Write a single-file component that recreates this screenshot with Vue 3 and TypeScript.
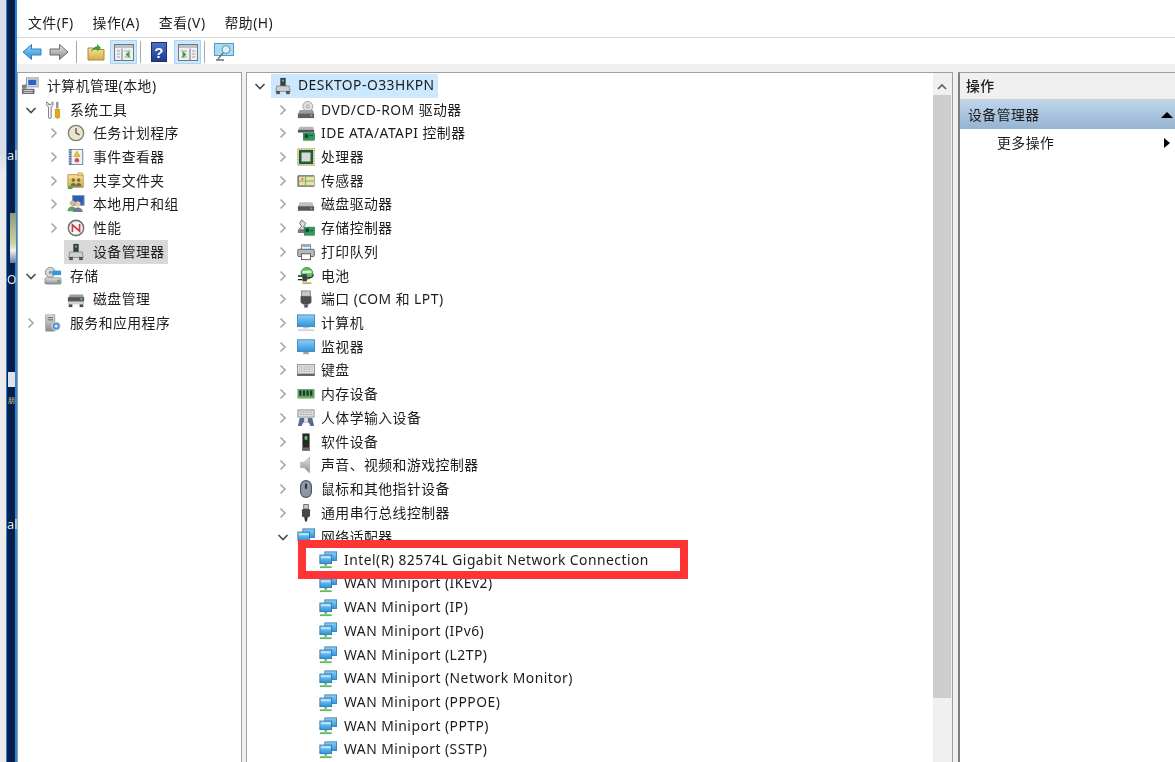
<script setup lang="ts">
interface Row {
  id: string
  icon: string
  text: string
  lv: string
  chev?: 'open' | 'closed'
  sel?: string
}

const menus: string[] = ['文件(F)', '操作(A)', '查看(V)', '帮助(H)']

const leftRows: Row[] = [
  { id: 'l0', icon: 'mgmt', text: '计算机管理(本地)', lv: 'l-0' },
  { id: 'l1', icon: 'tools', text: '系统工具', lv: 'l-1', chev: 'open' },
  { id: 'l2', icon: 'clock', text: '任务计划程序', lv: 'l-2', chev: 'closed' },
  { id: 'l3', icon: 'event', text: '事件查看器', lv: 'l-2', chev: 'closed' },
  { id: 'l4', icon: 'share', text: '共享文件夹', lv: 'l-2', chev: 'closed' },
  { id: 'l5', icon: 'users', text: '本地用户和组', lv: 'l-2', chev: 'closed' },
  { id: 'l6', icon: 'perf', text: '性能', lv: 'l-2', chev: 'closed' },
  { id: 'l7', icon: 'devmgr', text: '设备管理器', lv: 'l-3', sel: 'grey' },
  { id: 'l8', icon: 'storage', text: '存储', lv: 'l-1', chev: 'open' },
  { id: 'l9', icon: 'diskmgr', text: '磁盘管理', lv: 'l-3' },
  { id: 'l10', icon: 'services', text: '服务和应用程序', lv: 'l-1', chev: 'closed' }
]

const miniports: string[] = [
  'WAN Miniport (IKEv2)', 'WAN Miniport (IP)', 'WAN Miniport (IPv6)', 'WAN Miniport (L2TP)',
  'WAN Miniport (Network Monitor)', 'WAN Miniport (PPPOE)', 'WAN Miniport (PPTP)', 'WAN Miniport (SSTP)'
]

const categories: [string, string][] = [
  ['dvd', 'DVD/CD-ROM 驱动器'], ['ide', 'IDE ATA/ATAPI 控制器'], ['cpu', '处理器'], ['sensor', '传感器'],
  ['disk', '磁盘驱动器'], ['storectl', '存储控制器'], ['printer', '打印队列'], ['battery', '电池'],
  ['port', '端口 (COM 和 LPT)'], ['computer', '计算机'], ['monitor', '监视器'], ['keyboard', '键盘'],
  ['memory', '内存设备'], ['hid', '人体学输入设备'], ['software', '软件设备'], ['audio', '声音、视频和游戏控制器'],
  ['mouse', '鼠标和其他指针设备'], ['usb', '通用串行总线控制器']
]

const midRows: Row[] = [
  { id: 'm-root', icon: 'devmgr', text: 'DESKTOP-O33HKPN', lv: 'm-0', chev: 'open', sel: 'blue' },
  ...categories.map(([icon, text]): Row => ({ id: text, icon, text, lv: 'm-1', chev: 'closed' })),
  { id: 'm-net', icon: 'net', text: '网络适配器', lv: 'm-1', chev: 'open' },
  { id: 'm-intel', icon: 'net', text: 'Intel(R) 82574L Gigabit Network Connection', lv: 'm-2' },
  ...miniports.map((text): Row => ({ id: text, icon: 'net', text, lv: 'm-2' }))
]
</script>

<template>
  <div class="page">
    <svg class="defs" aria-hidden="true">
      <defs>
        <linearGradient id="gBlue" x1="0" y1="0" x2="0" y2="1"><stop offset="0" stop-color="#8fd0f5" /><stop offset="1" stop-color="#2f93dc" /></linearGradient>
        <linearGradient id="gGrey" x1="0" y1="0" x2="0" y2="1"><stop offset="0" stop-color="#e4e4e4" /><stop offset="1" stop-color="#8c8c8c" /></linearGradient>
        <linearGradient id="gGold" x1="0" y1="0" x2="0" y2="1"><stop offset="0" stop-color="#f6e39a" /><stop offset="1" stop-color="#d8ac45" /></linearGradient>
        <linearGradient id="gHelp" x1="0" y1="0" x2="0" y2="1"><stop offset="0" stop-color="#4f74c8" /><stop offset="1" stop-color="#1d3a8c" /></linearGradient>
        <symbol id="net" viewBox="0 0 20 20">
          <rect x="6.5" y="1" width="13" height="9.5" fill="url(#gBlue)" stroke="#3a7fb5" />
          <rect x="1" y="4.5" width="13" height="9.5" fill="url(#gBlue)" stroke="#2b77b0" />
          <path d="M2 6h11v2H2z" fill="#bfe6fb" />
          <path d="M6 14.5h3v2H6z" fill="#6db36d" />
          <path d="M1 17h13v2H1z" fill="#5fb85f" />
        </symbol>
        <symbol id="mgmt" viewBox="0 0 20 20">
          <rect x="6" y="1" width="13" height="10" fill="#dfe3e8" stroke="#8b8f96" />
          <rect x="8" y="3" width="9" height="6" fill="#2c62c9" />
          <path d="M1 9l5-1v5H1z" fill="#7c8187" />
          <rect x="1" y="13" width="14" height="6" rx="1" fill="#6d7177" />
          <path d="M3 15h10M3 17h10" stroke="#d8d8d8" />
        </symbol>
        <symbol id="tools" viewBox="0 0 20 20">
          <path d="M3 1v4l2 1.5V18a1.5 1.5 0 0 0 3 0V6.5L10 5V1L8 2.500V4H5V2.500z" fill="#f2f2f2" stroke="#777" />
          <rect x="13.500" y="1" width="2.500" height="7" fill="#8d8d8d" />
          <path d="M12.500 9h4.500l.5 9-2.500 1.500-2.500-1.500z" fill="#e5a714" stroke="#a97a05" stroke-width=".6" />
        </symbol>
        <symbol id="clock" viewBox="0 0 20 20">
          <circle cx="10" cy="10" r="8.500" fill="#ece4c9" stroke="#7d7d76" stroke-width="1.500" />
          <path d="M10 4.500V10l4 2" stroke="#555" stroke-width="1.500" fill="none" />
        </symbol>
        <symbol id="event" viewBox="0 0 20 20">
          <rect x="2" y="1" width="16" height="18" rx="1" fill="#5a77a8" />
          <rect x="5" y="2" width="12" height="16" fill="#f1f1ef" />
          <path d="M3 3v14" stroke="#d8dde8" stroke-dasharray="1 1.500" stroke-width="2" />
          <path d="M11 3.500l3.500 6h-7z" fill="#f0c419" stroke="#a98410" stroke-width=".5" />
          <circle cx="11" cy="13.500" r="2.500" fill="#c9505e" />
        </symbol>
        <symbol id="share" viewBox="0 0 20 20">
          <path d="M1 3h17v14H1z" fill="url(#gGold)" stroke="#b5934a" />
          <path d="M12 1h5v3h-5z" fill="#ecd98f" stroke="#b5934a" stroke-width=".7" />
          <circle cx="7" cy="9" r="2" fill="#7b6a3b" /><circle cx="13" cy="9" r="2" fill="#7b6a3b" />
          <path d="M4 16c0-5 6-5 6 0zM10 16c0-5 6-5 6 0z" fill="#64724d" />
          <path d="M1 16h5v3H1z" fill="#4ba06a" />
        </symbol>
        <symbol id="users" viewBox="0 0 20 20">
          <rect x="6" y="0.500" width="13" height="11" fill="#2c5fb8" stroke="#8d99ad" />
          <circle cx="6" cy="9" r="3" fill="#d9b48f" /><path d="M0.500 18c0-7 10-7 10 0z" fill="#5ca25c" />
          <circle cx="12" cy="10" r="3" fill="#e6c8a8" /><path d="M6.500 19c0-7 11-7 11 0z" fill="#6c7e92" />
        </symbol>
        <symbol id="perf" viewBox="0 0 20 20">
          <circle cx="10" cy="10" r="8.500" fill="#f6f6f6" stroke="#77786f" stroke-width="1.800" />
          <path d="M6 14.500V6.500l8 7V5.500" stroke="#c8373c" stroke-width="1.800" fill="none" />
        </symbol>
        <symbol id="devmgr" viewBox="0 0 20 20">
          <rect x="7" y="1" width="6" height="9" fill="#3d4043" />
          <rect x="9" y="3" width="2" height="2" fill="#60d060" />
          <path d="M3 10h14l1 6H2z" fill="#cfd0d1" stroke="#74777a" stroke-width=".8" />
          <rect x="2.500" y="15.500" width="4" height="3.500" fill="#4d5054" />
          <rect x="13.500" y="15.500" width="4" height="3.500" fill="#4d5054" />
        </symbol>
        <symbol id="storage" viewBox="0 0 20 20">
          <circle cx="7" cy="6" r="5.500" fill="#d5d8d8" stroke="#888" /><circle cx="7" cy="6" r="1.500" fill="#888" />
          <path d="M9 4h10v5H9z" fill="#2f9ad8" />
          <rect x="1" y="12" width="18" height="7" rx="1.500" fill="url(#gGrey)" stroke="#777" stroke-width=".7" />
          <rect x="15" y="14" width="2.500" height="3" fill="#5ca85c" />
        </symbol>
        <symbol id="diskmgr" viewBox="0 0 20 20">
          <path d="M3 5h15l1 6H1z" fill="#9a9c9e" />
          <rect x="1" y="8" width="18" height="5" fill="#55585b" />
          <rect x="15" y="9" width="2" height="2" fill="#6bd06b" />
          <rect x="1" y="13" width="18" height="3" fill="#d0d0d0" />
          <rect x="2" y="16" width="4" height="3" fill="#44474a" /><rect x="14" y="16" width="4" height="3" fill="#44474a" />
        </symbol>
        <symbol id="services" viewBox="0 0 20 20">
          <rect x="2" y="1" width="10" height="18" fill="url(#gGrey)" stroke="#8b8d90" stroke-width=".8" />
          <path d="M4 4h6M4 6.500h6" stroke="#555" />
          <circle cx="13.500" cy="13.500" r="4.500" fill="#5e93c9" stroke="#dce6f2" />
          <circle cx="13.500" cy="13.500" r="1.500" fill="#e8f0f8" />
        </symbol>
        <symbol id="dvd" viewBox="0 0 20 20">
          <circle cx="12" cy="6" r="5.500" fill="#dfe0e0" stroke="#9c9c9c" /><circle cx="12" cy="6" r="1.600" fill="#fff" stroke="#888" />
          <path d="M3 10h15l1 5H1z" fill="#9a9c9e" />
          <rect x="1" y="14" width="18" height="5" fill="#5e6063" />
          <rect x="15" y="15" width="2" height="2" fill="#6bd06b" />
        </symbol>
        <symbol id="ide" viewBox="0 0 20 20">
          <path d="M3 3h15l1 4H1z" fill="#b4b6b8" />
          <rect x="1" y="6.500" width="18" height="3" fill="#55585b" />
          <rect x="7" y="10" width="12.500" height="8" fill="#2f9a63" stroke="#1e6f46" stroke-width=".6" />
          <path d="M9 12h3v3H9zM14 13h4" fill="#143" stroke="#143" />
          <path d="M8 18.500h10" stroke="#c5a23c" stroke-width="1.200" stroke-dasharray="1 1" />
        </symbol>
        <symbol id="cpu" viewBox="0 0 20 20">
          <rect x="0.800" y="0.800" width="18.400" height="18.400" fill="none" stroke="#c3a13e" stroke-width="1.500" stroke-dasharray="1 .8" />
          <rect x="2" y="2" width="16" height="16" fill="#235c34" />
          <rect x="5" y="5" width="10" height="10" fill="#dadad7" />
        </symbol>
        <symbol id="sensor" viewBox="0 0 20 20">
          <rect x="0.500" y="3.500" width="19" height="13" rx="1" fill="#606366" />
          <rect x="2" y="5" width="17" height="10" fill="#e9e3a3" />
          <path d="M2 10h17M9.500 5v10" stroke="#76ae72" stroke-width="1.200" />
          <circle cx="6" cy="7.500" r="1" fill="#d24848" />
        </symbol>
        <symbol id="disk" viewBox="0 0 20 20">
          <path d="M3 8h14l2 5H1z" fill="#bfc0c2" />
          <rect x="1" y="12.500" width="18" height="5" fill="#55585b" />
          <rect x="15" y="14" width="2" height="1.500" fill="#6bd06b" />
        </symbol>
        <symbol id="storectl" viewBox="0 0 20 20">
          <path d="M5 1l5 4-3 4 4 3H2l3-4-2-3z" fill="#dadada" stroke="#6a6a6a" />
          <rect x="1" y="12" width="8" height="3.500" fill="#74777a" />
          <rect x="8" y="9" width="11.500" height="9" fill="#2f9a63" stroke="#1e6f46" stroke-width=".6" />
          <path d="M10 11h3v3h-3zM15 13h3" fill="#143" stroke="#143" />
          <path d="M9 18.500h10" stroke="#c5a23c" stroke-width="1.200" stroke-dasharray="1 1" />
        </symbol>
        <symbol id="printer" viewBox="0 0 20 20">
          <rect x="5" y="2" width="10" height="6" fill="#f5f5f5" stroke="#777" />
          <path d="M6 3.500h8" stroke="#4aa3df" stroke-width="1.500" />
          <rect x="0.800" y="7" width="18.400" height="8" rx="1" fill="#b6b8ba" stroke="#5c5f62" />
          <rect x="5" y="12" width="10" height="6.500" fill="#fff" stroke="#555" />
        </symbol>
        <symbol id="battery" viewBox="0 0 20 20">
          <circle cx="11" cy="7" r="6.500" fill="#5ebd58" stroke="#3b8a3c" />
          <path d="M6 4h10v3H6z" fill="#d6efd4" />
          <path d="M1 10h5M1 14h5" stroke="#222" stroke-width="1.500" />
          <path d="M6 8h5v8H6z" fill="#3d3f40" />
          <path d="M11 12c6 0 7-1 7-4" stroke="#333" stroke-width="1.500" fill="none" />
          <path d="M6 17h10v2H6z" fill="#b9b36a" />
        </symbol>
        <symbol id="port" viewBox="0 0 20 20">
          <rect x="5" y="1" width="10" height="6" fill="#b9bbbd" stroke="#666" stroke-width=".7" />
          <path d="M6.500 3h7M6.500 5h7" stroke="#eee" stroke-dasharray="1 1" />
          <path d="M4 7h12v7l-3 2H7l-3-2z" fill="#4a4c4f" />
          <rect x="8" y="16" width="4" height="3.500" fill="#55585b" />
        </symbol>
        <symbol id="computer" viewBox="0 0 20 20">
          <rect x="0.500" y="1" width="19" height="13" fill="url(#gBlue)" stroke="#3f87bd" />
          <rect x="7" y="14.500" width="6" height="1.500" fill="#b9bfc5" />
          <rect x="1" y="17" width="18" height="2" fill="#d2d6da" />
        </symbol>
        <symbol id="monitor" viewBox="0 0 20 20">
          <rect x="0.500" y="2" width="19" height="13" fill="url(#gBlue)" stroke="#3f87bd" />
          <rect x="7" y="15.500" width="6" height="2.500" fill="#9aa0a6" />
        </symbol>
        <symbol id="keyboard" viewBox="0 0 20 20">
          <rect x="0.500" y="4" width="19" height="12" fill="#e4e4e4" stroke="#888" />
          <path d="M2.500 6.500h15M2.500 9h15M2.500 11.500h15" stroke="#a8a8a8" stroke-width="1.200" stroke-dasharray="1 .8" />
          <rect x="0.500" y="14" width="19" height="2.500" fill="#5f6265" />
        </symbol>
        <symbol id="memory" viewBox="0 0 20 20">
          <rect x="0.500" y="4.500" width="19" height="10.500" fill="#5ea468" />
          <path d="M2.500 6h2.500v6H2.500zM6.500 6H9v6H6.500zM10.500 6H13v6h-2.500zM14.500 6H17v6h-2.500z" fill="#20382a" />
          <path d="M1 14.500h18" stroke="#d4c26d" stroke-dasharray="1 .8" />
        </symbol>
        <symbol id="hid" viewBox="0 0 20 20">
          <rect x="1" y="1" width="18" height="8" fill="#dcdcdc" stroke="#8c8c8c" />
          <path d="M3 3.500h14M3 6h14" stroke="#9a9a9a" stroke-dasharray="1 .8" />
          <path d="M3 10h14l2 9h-4l-2-4H7l-2 4H1z" fill="#566a8b" />
          <path d="M8 10h4v5H8z" fill="#e6e6e6" />
        </symbol>
        <symbol id="software" viewBox="0 0 20 20">
          <rect x="6" y="0.500" width="8" height="19" fill="#26282a" />
          <rect x="8.500" y="3.500" width="3" height="4" fill="#5fd05f" />
          <rect x="6" y="16" width="8" height="3.500" fill="#66696c" />
        </symbol>
        <symbol id="audio" viewBox="0 0 20 20">
          <path d="M4 7h4l6-6v18l-6-6H4z" fill="url(#gGrey)" stroke="#a0a0a0" stroke-width=".6" />
        </symbol>
        <symbol id="mouse" viewBox="0 0 20 20">
          <rect x="4" y="0.700" width="12" height="18.600" rx="6" fill="#8e99a6" stroke="#48505a" stroke-width="1.200" />
          <rect x="8.800" y="4" width="2.400" height="6" rx="1.200" fill="#2e343a" />
        </symbol>
        <symbol id="usb" viewBox="0 0 20 20">
          <rect x="7.500" y="0.500" width="5" height="5" fill="#d0d0d0" stroke="#666" />
          <rect x="5.500" y="5.500" width="9" height="9" rx="1.500" fill="#46494c" />
          <path d="M8 14.500h4l-1 5H9z" fill="#303234" />
        </symbol>
      </defs>
    </svg>

    <div class="strip">
      <span class="frag frag-al1">al</span>
      <span class="frag frag-slider"></span>
      <span class="frag frag-o">O</span>
      <span class="frag frag-tile"></span>
      <span class="frag frag-cn">朋</span>
      <span class="frag frag-al2">al</span>
    </div>

    <div class="window">
      <nav class="menubar">
        <span v-for="m in menus" :key="m">{{ m }}</span>
      </nav>

      <div class="toolbar">
        <svg class="t-arrow" viewBox="0 0 20 18"><path d="M9.500 1.500L1 9l8.500 7.500V12H19V6H9.500z" fill="url(#gBlue)" stroke="#2f7fc0" /></svg>
        <svg class="t-arrow" viewBox="0 0 20 18"><path d="M10.500 1.500L19 9l-8.500 7.500V12H1V6h9.500z" fill="url(#gGrey)" stroke="#6b6b6b" /></svg>
        <i class="sep"></i>
        <svg class="t-up" viewBox="0 0 18 18"><path d="M1 5h5l1.500 1.500H17V17H1z" fill="url(#gGold)" stroke="#a58a3f" /><path d="M4 9c1-4 4-5.500 6-5.500V1l4 4-4 3.500V6c-3 0-4 1-6 3z" fill="#37a13b" /></svg>
        <span class="t-toggle">
          <svg viewBox="0 0 20 17"><rect x=".5" y=".5" width="19" height="16" fill="#eef0f2" stroke="#777" /><path d="M1 1h18v3H1z" fill="#bcc2c8" /><path d="M8 4.500v12" stroke="#777" /><path d="M3 7h3M3 10h3M3 13h3M10.500 7h6M10.500 13h6" stroke="#9aa4ae" /><path d="M15.500 7v7l-4-3.500z" fill="#38a33d" /></svg>
        </span>
        <i class="sep sep-b"></i>
        <svg class="t-help" viewBox="0 0 16 20"><rect x=".5" y=".5" width="15" height="19" fill="url(#gHelp)" stroke="#1b2f6e" /><text x="8" y="15.500" text-anchor="middle" class="help-q">?</text></svg>
        <span class="t-toggle t-toggle-b">
          <svg viewBox="0 0 20 17"><rect x=".5" y=".5" width="19" height="16" fill="#eef0f2" stroke="#777" /><path d="M1 1h18v3H1z" fill="#bcc2c8" /><path d="M12 4.500v12" stroke="#777" /><path d="M14 7h3.500M14 10h3.500M14 13h3.500M3 7h6M3 13h6" stroke="#9aa4ae" /><path d="M4.500 7v7l4-3.500z" fill="#38a33d" /></svg>
        </span>
        <i class="sep sep-c"></i>
        <svg class="t-mon" viewBox="0 0 20 18"><rect x=".5" y=".5" width="19" height="12" fill="#a9dcf2" stroke="#4e9cc4" /><circle cx="12" cy="6.500" r="4" fill="#d9f1fb" stroke="#5f8ea6" /><path d="M9 10l-5 6M2 17h8" stroke="#6b7478" stroke-width="1.400" /></svg>
      </div>

      <div class="panes">
        <section class="pane pane-left">
          <div v-for="r in leftRows" :key="r.id" class="row" :class="r.lv">
            <span v-if="r.chev" class="chev">
              <svg viewBox="0 0 12 12">
                <path v-if="r.chev === 'open'" d="M1.500 4l4.500 4.500L10.500 4" class="c-open" />
                <path v-else d="M3.500 1.500L8 6l-4.500 4.500" class="c-closed" />
              </svg>
            </span>
            <span class="item" :class="r.sel">
              <svg class="ico"><use :href="'#' + r.icon" /></svg>
              <span class="txt">{{ r.text }}</span>
            </span>
          </div>
        </section>

        <section class="pane pane-mid">
          <div class="mid-tree">
            <div v-for="r in midRows" :key="r.id" class="row" :class="r.lv">
              <span v-if="r.chev" class="chev">
                <svg viewBox="0 0 12 12">
                  <path v-if="r.chev === 'open'" d="M1.500 4l4.500 4.500L10.500 4" class="c-open" />
                  <path v-else d="M3.500 1.500L8 6l-4.500 4.500" class="c-closed" />
                </svg>
              </span>
              <span class="item" :class="r.sel">
                <svg class="ico"><use :href="'#' + r.icon" /></svg>
                <span class="txt">{{ r.text }}</span>
              </span>
            </div>
          </div>
          <div class="scrollbar">
            <svg class="sb-arrow" viewBox="0 0 10 8"><path d="M1 6l4-4 4 4" fill="none" stroke="#606060" stroke-width="1.600" /></svg>
            <div class="sb-thumb"></div>
          </div>
        </section>

        <aside class="pane-right">
          <div class="act-head"><span class="txt">操作</span></div>
          <div class="act-band"><span class="txt">设备管理器</span><i class="tri-up"></i></div>
          <div class="act-item"><span class="txt">更多操作</span><i class="tri-right"></i></div>
        </aside>
      </div>
    </div>

    <div class="redbox"></div>
  </div>
</template>

<style>
html, body { margin: 0; background: #fff; overflow: hidden; }
</style>

<style scoped>
.page {
  position: relative;
  display: flex;
  width: 1175px;
  height: 762px;
  overflow: hidden;
  font-family: "Noto Sans", "Noto Sans CJK SC", sans-serif;
  font-size: 13.85px;
  letter-spacing: 0.48px;
  color: #1c1c1c;
  filter: blur(0.5px);
}
.defs { width: 0; height: 0; flex: none; }

.strip {
  position: relative;
  flex: none;
  width: 17px;
  overflow: hidden;
  background:
    linear-gradient(#d6dce8 0 150px, #ececec 175px) left top / 6px 100% no-repeat,
    linear-gradient(90deg, #2f86d6 6px, #2f86d6 7px, #02204a 7px, #02204a 15.5px, #2f86d6 15.5px);
}
.frag { position: absolute; font-size: 13px; line-height: 14px; letter-spacing: 0; color: #e6e6e6; }
.frag-al1 { left: 7px; top: 148px; }
.frag-al2 { left: 7px; top: 517px; }
.frag-o { left: 7px; top: 273px; font-size: 12px; }
.frag-slider { left: 10px; top: 213px; width: 6px; height: 50px; background: linear-gradient(#8a9a86, #c9d3a0 60%, #f0f0f0 75%, #5a7fae); }
.frag-tile { left: 8px; top: 372px; width: 7px; height: 15px; background: #dfe3e8; }
.frag-cn { left: 8px; top: 394px; font-size: 7px; color: #d6c58c; }

.window { flex: 1; min-width: 0; display: flex; flex-direction: column; background: #f0f0f0; }

.menubar {
  flex: none;
  box-sizing: border-box;
  height: 38px;
  display: flex;
  align-items: center;
  gap: 19px;
  padding: 7px 0 0 11px;
  background: #fff;
  border-bottom: 1px solid #d9d9d9;
}

.toolbar {
  flex: none;
  height: 26px;
  display: flex;
  align-items: center;
  padding: 2px 0 0 5px;
  background: #fff;
  box-sizing: border-box;
}
.t-arrow { width: 20px; height: 18px; margin-right: 7px; }
.sep { width: 1px; height: 22px; background: #a8a8a8; margin: 0 10px 0 0; }
.t-up { width: 18px; height: 18px; margin-right: 5px; }
.t-toggle {
  box-sizing: border-box;
  width: 27px;
  height: 24px;
  display: flex;
  align-items: center;
  justify-content: center;
  background: #cce8ff;
  border: 1px solid #a9d6f8;
  margin-right: 3px;
}
.t-toggle svg { width: 20px; height: 17px; }
.t-toggle-b { margin: 0 3px 0 7px; }
.sep-b { margin-right: 10px; }
.sep-c { margin-right: 9px; }
.t-help { width: 16px; height: 20px; }
.help-q { font: bold 15px "Liberation Sans", sans-serif; fill: #fff; }
.t-mon { width: 20px; height: 18px; }

.panes { flex: 1; min-height: 0; display: flex; padding-top: 8px; }

.pane { box-sizing: border-box; background: #fff; border: 1px solid #a0a0a0; border-bottom: 0; }
.pane-left { flex: none; width: 225px; padding-top: 1px; }
.pane-mid {
  flex: none;
  width: 707px;
  margin-left: 4px;
  display: flex;
}
.mid-tree { flex: 1; min-width: 0; padding-top: 1px; }

.row { display: flex; align-items: center; height: 23.72px; white-space: nowrap; }
.txt { padding-bottom: 2px; }
.chev { flex: none; width: 17px; display: flex; }
.chev svg { width: 12px; height: 12px; margin-left: 0; }
.pane-left .chev svg { margin-left: 1px; }
.c-open { fill: none; stroke: #4a4a4a; stroke-width: 1.600; }
.c-closed { fill: none; stroke: #a6a6a6; stroke-width: 1.600; }
.item { display: flex; align-items: center; height: 23.72px; padding: 0 3px; gap: 6px; }
.ico { flex: none; width: 18px; height: 18px; }
.grey { background: #d9d9d9; }
.blue { background: #cce8ff; }

.pane-left .item { gap: 8px; }
.l-0 { padding-left: 0; }
.l-1 { padding-left: 6px; }
.l-2 { padding-left: 29px; }
.l-3 { padding-left: 46px; }

.m-0 { padding-left: 7px; }
.m-1 { padding-left: 30px; }
.m-2 { padding-left: 69px; }
.m-2 .item { gap: 7px; }

.scrollbar { flex: none; width: 19px; background: #f0f0f0; display: flex; flex-direction: column; align-items: flex-start; }
.sb-arrow { width: 10px; height: 8px; margin: 10px 0 4px 4px; }
.sb-thumb { width: 18px; height: 603px; background: #cdcdcd; }

.pane-right {
  flex: 1;
  min-width: 0;
  margin-left: 5px;
  background: #fff;
  border-left: 2px solid #808080;
  border-top: 1px solid #a0a0a0;
}
.act-head {
  height: 26px;
  display: flex;
  align-items: center;
  padding-left: 6px;
  background: #f0f0f0;
  font-weight: 500;
  border-bottom: 1px solid #d0d0d0;
}
.act-band {
  height: 29px;
  display: flex;
  align-items: center;
  justify-content: space-between;
  padding: 0 2px 0 8px;
  background: linear-gradient(#bfd6ec, #96b3d0);
}
.act-item {
  height: 28px;
  display: flex;
  align-items: center;
  justify-content: space-between;
  padding: 0 5px 0 37px;
}
.tri-up { width: 0; height: 0; border: 6px solid transparent; border-top: 0; border-bottom: 6px solid #000; }
.tri-right { width: 0; height: 0; border: 5.500px solid transparent; border-right: 0; border-left: 6px solid #000; }

.redbox {
  position: absolute;
  left: 298px;
  top: 540px;
  box-sizing: border-box;
  width: 390px;
  height: 39px;
  border: 8px solid #ff3434;
}
</style>
